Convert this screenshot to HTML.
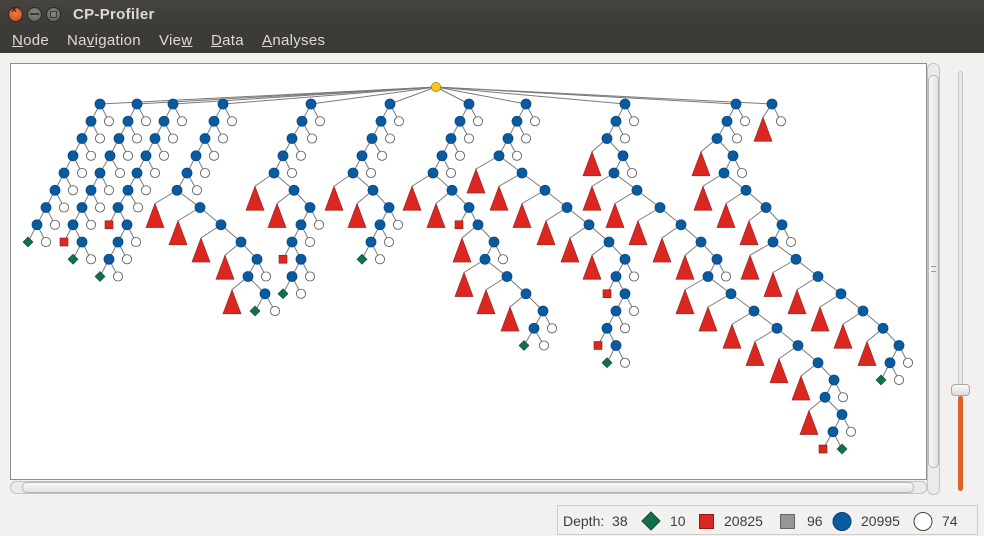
<!DOCTYPE html>
<html><head><meta charset="utf-8"><style>
*{margin:0;padding:0;box-sizing:border-box}
body{width:984px;height:536px;overflow:hidden;background:#f2f1f0;font-family:"Liberation Sans",sans-serif;position:relative}
#title{position:absolute;left:0;top:0;width:984px;height:29px;background:linear-gradient(#45443f,#3c3b37);}
#menu{position:absolute;left:0;top:29px;width:984px;height:24px;background:#3c3b37;color:#dfdbd2;font-size:15px;letter-spacing:0.3px}
#menu span{position:absolute;top:3px}
.btn{position:absolute;top:7px;width:15px;height:15px;border-radius:50%;}
#canvas{position:absolute;left:10px;top:63px;width:917px;height:417px;background:#fff;border:1px solid #8d8d8d}
#status{position:absolute;left:557px;top:505px;width:421px;height:30px;border:1px solid #cfcdca;font-size:14px;color:#3c3c3c}
#status span{position:absolute;top:7px}
</style></head><body>
<div id="title">
<div class="btn" style="left:8px;background:radial-gradient(circle at 50% 40%,#f07a4a,#d04512);border:1px solid #2a2a27"></div>
<div class="btn" style="left:27px;background:radial-gradient(circle at 50% 40%,#8a8983,#5d5c57);border:1px solid #2a2a27"></div>
<div class="btn" style="left:46px;background:radial-gradient(circle at 50% 40%,#8a8983,#5d5c57);border:1px solid #2a2a27"></div>
<span style="position:absolute;left:11px;top:5px;font-size:10px;color:#3a1a0a;font-weight:bold">×</span>
<span style="position:absolute;left:30px;top:13px;width:9px;height:2px;background:#3c3b37"></span>
<span style="position:absolute;left:50px;top:11px;width:7px;height:7px;border:1px solid #3c3b37"></span>
<span style="position:absolute;left:73px;top:6px;font-size:15px;letter-spacing:0.3px;font-weight:bold;color:#dfdbd2">CP-Profiler</span>
</div>
<div id="menu">
<span style="left:12px"><u>N</u>ode</span>
<span style="left:67px">Na<u>v</u>igation</span>
<span style="left:159px">Vie<u>w</u></span>
<span style="left:211px"><u>D</u>ata</span>
<span style="left:262px"><u>A</u>nalyses</span>
</div>
<div id="canvas"></div>
<div style="position:absolute;left:927px;top:63px;width:13px;height:432px;border:1px solid #c5c3c0;border-radius:6px;background:#ecebe9"></div>
<div style="position:absolute;left:928px;top:75px;width:11px;height:393px;border:1px solid #b8b6b3;border-radius:5px;background:linear-gradient(90deg,#f7f7f6,#e4e3e1)"></div>
<div style="position:absolute;left:931px;top:266px;width:5px;height:6px;border-top:1px solid #999;border-bottom:1px solid #999"></div>
<div style="position:absolute;left:10px;top:481px;width:917px;height:13px;border:1px solid #c5c3c0;border-radius:6px;background:#ecebe9"></div>
<div style="position:absolute;left:22px;top:482px;width:892px;height:11px;border:1px solid #b8b6b3;border-radius:5px;background:linear-gradient(#f7f7f6,#e4e3e1)"></div>
<div style="position:absolute;left:958px;top:71px;width:5px;height:420px;border:1px solid #c8c6c3;border-radius:3px;background:#e8e7e5"></div>
<div style="position:absolute;left:958px;top:396px;width:5px;height:95px;border-radius:3px;background:#e0602a"></div>
<div style="position:absolute;left:951px;top:384px;width:19px;height:12px;border:1px solid #a9a7a4;border-radius:4px;background:linear-gradient(#fbfbfa,#dedcd9)"></div>
<div id="status">
<span style="left:5px">Depth:&nbsp; 38</span>
<svg style="position:absolute;left:0;top:0" width="421" height="30">
<polygon points="93,6 102,15 93,24 84,15" fill="#137148" stroke="#0c4d30"/>
<rect x="141.5" y="8.5" width="14" height="14" fill="#dc2620" stroke="#8e1a16"/>
<rect x="222.5" y="8.5" width="14" height="14" fill="#969696" stroke="#666"/>
<circle cx="284" cy="15.5" r="9" fill="#0a5aa0" stroke="#06406f"/>
<circle cx="365" cy="15.5" r="9" fill="#fff" stroke="#444"/>
</svg>
<span style="left:112px">10</span>
<span style="left:166px">20825</span>
<span style="left:249px">96</span>
<span style="left:303px">20995</span>
<span style="left:384px">74</span>
</div>
<svg id="tree" style="position:absolute;left:0;top:0" width="984" height="536"></svg>
<script>
var trees=[
"B100(B91(B82(B73(B64(B55(B46(B37(G28 W) W) W) W) W) W) W) W)",
"B137(B128(B119(B110(B100(B91(B82(B73(R64 B82(G73 W)) W) W) W) W) W) W) W)",
"B173(B164(B155(B146(B137(B128(B118(R109 B127(B118(B109(G100 W) W) W)) W) W) W) W) W) W)",
"B223(B214(B205(B196(B187(B177(T155 B200(T178 B221(T201 B241(T225 B257(B248(T232 B265(G255 W)) W))))) W) W) W) W) W)",
"B311(B302(B292(B283(B274(T255 B294(T277 B310(B301(B292(R283 B301(B292(G283 W) W)) W) W))) W) W) W) W)",
"B390(B381(B372(B362(B353(T334 B373(T357 B389(B380(B371(G362 W) W) W))) W) W) W) W)",
"B469(B460(B451(B442(B433(T412 B452(T436 B469(R459 B478(T462 B494(B485(T464 B507(T486 B526(T510 B543(B534(G524 W) W)))) W))))) W) W) W) W)",
"B526(B517(B508(B499(T476 B522(T499 B545(T522 B567(T546 B589(T570 B609(T592 B625(B616(R607 B625(B616(B607(R598 B616(G607 W)) W) W)) W))))))) W) W) W)",
"B625(B616(B607(T592 B623(B614(T592 B637(T615 B660(T638 B681(T662 B701(T685 B717(B708(T685 B731(T708 B754(T732 B777(T755 B798(T779 B818(T801 B834(B825(T809 B842(B833(R823 G842) W)) W))))))) W)))))) W)) W) W)",
"B736(B727(B717(T701 B733(B724(T703 B746(T726 B766(T749 B782(B773(T750 B796(T773 B818(T797 B841(T820 B863(T843 B883(T867 B899(B890(G881 W) W))))))) W)))) W)) W) W)",
"B772(T763 W781)"
];
function parse(s){var i=0;
 function node(){while(s[i]==' ')i++;var t=s[i++];var n='';while(i<s.length&&/[0-9.]/.test(s[i]))n+=s[i++];
  var o={t:t,x:n?parseFloat(n):null,c:[]};
  if(s[i]=='('){i++;o.c.push(node());o.c.push(node());while(s[i]==' ')i++;i++;}
  return o;}
 return node();}
var lines='',shapes='';
function Y(r){return 104+17.25*r;}
function draw(n,r,px,py){
 var y=Y(r);
 if(px!=null){var ty=n.t=='T'?y-4:y;lines+='<line x1="'+px+'" y1="'+py+'" x2="'+n.x+'" y2="'+ty+'" stroke="#7a7a7a" stroke-width="1"/>';}
 if(n.c.length){var a=n.c[0],b=n.c[1];if(a.x==null)a.x=2*n.x-b.x;if(b.x==null)b.x=2*n.x-a.x;draw(a,r+1,n.x,y);draw(b,r+1,n.x,y);}
 var x=n.x;
 if(n.t=='B')shapes+='<circle cx="'+x+'" cy="'+y+'" r="5" fill="#0a5aa0" stroke="#074a85" stroke-width=".8"/>';
 else if(n.t=='W')shapes+='<circle cx="'+x+'" cy="'+y+'" r="4.6" fill="#fff" stroke="#666" stroke-width=".9"/>';
 else if(n.t=='G')shapes+='<polygon points="'+x+','+(y-5)+' '+(x+5)+','+y+' '+x+','+(y+5)+' '+(x-5)+','+y+'" fill="#137148" stroke="#0c4d30" stroke-width=".6"/>';
 else if(n.t=='R')shapes+='<rect x="'+(x-4)+'" y="'+(y-4)+'" width="8" height="8" fill="#dc2620" stroke="#8e1a16" stroke-width=".6"/>';
 else if(n.t=='T')shapes+='<polygon points="'+x+','+(y-4)+' '+(x+9)+','+(y+20)+' '+(x-9)+','+(y+20)+'" fill="#dc2620" stroke="#9a2a25" stroke-width=".7"/>';
}
trees.forEach(function(s){draw(parse(s),0,436,87);});
shapes+='<circle cx="436" cy="87" r="4.6" fill="#f7c81b" stroke="#a08010" stroke-width=".8"/>';
document.getElementById('tree').innerHTML=lines+shapes;
</script>
</body></html>
